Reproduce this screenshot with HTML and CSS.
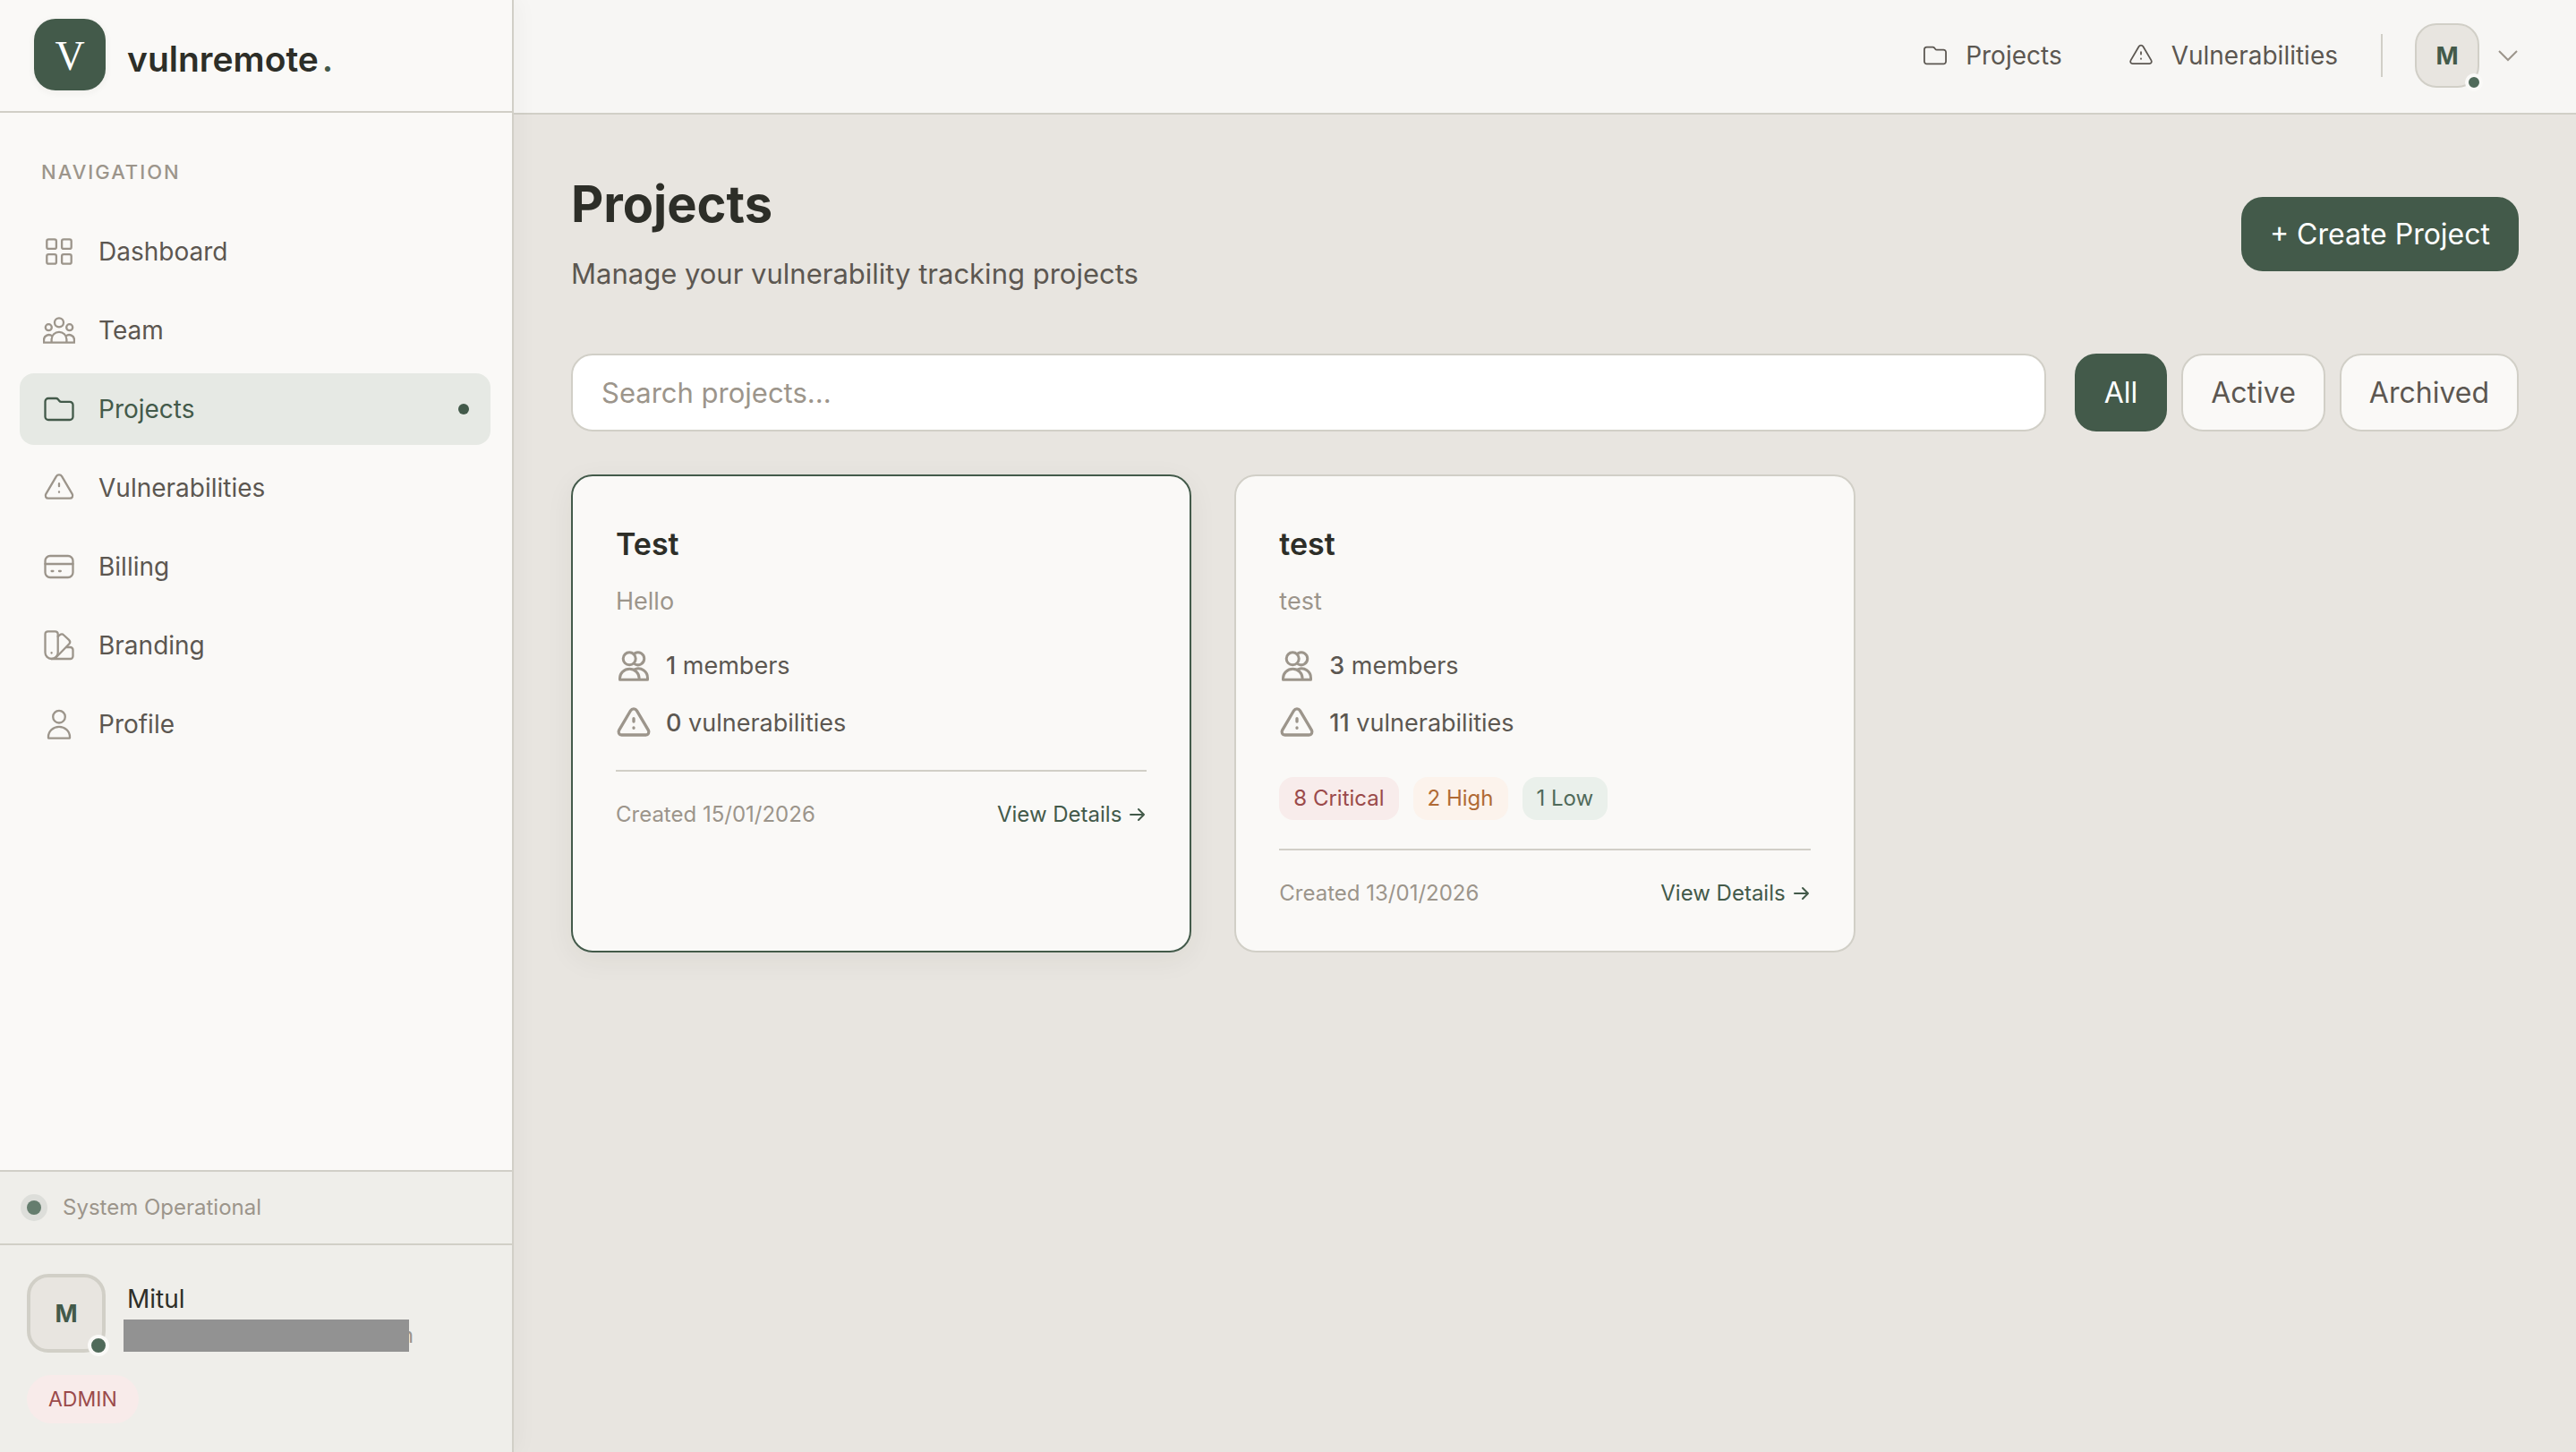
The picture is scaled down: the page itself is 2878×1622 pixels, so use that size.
FILE: index.html
```html
<!DOCTYPE html>
<html lang="en">
<head>
  <meta charset="UTF-8">
  <meta name="viewport" content="width=device-width, initial-scale=1">
  <title>Projects - vulnremote</title>
  <link rel="stylesheet" href="styles.css">
</head>
<body>

<!-- shared icons -->
<svg class="sprite" aria-hidden="true">
  <symbol id="i-grid" viewBox="0 0 36 36">
    <rect x="4.3" y="4.3" width="10.6" height="10.6" rx="2"/>
    <rect x="21.1" y="4.3" width="10.6" height="10.6" rx="2"/>
    <rect x="4.3" y="21.1" width="10.6" height="10.6" rx="2"/>
    <rect x="21.1" y="21.1" width="10.6" height="10.6" rx="2"/>
  </symbol>
  <symbol id="i-team" viewBox="0 0 36 36">
    <circle cx="18" cy="9.3" r="5"/>
    <circle cx="6.3" cy="14.7" r="3.5"/>
    <circle cx="29.7" cy="14.7" r="3.5"/>
    <path d="M1 31.7h34M9.6 31.7V28a8.4 8.1 0 0 1 16.8 0v3.7M1 31.7v-3a5.6 5.6 0 0 1 9.3-4.2M35 31.7v-3a5.6 5.6 0 0 0-9.3-4.2"/>
  </symbol>
  <symbol id="i-folder" viewBox="0 0 36 36">
    <path d="M2.5 9.5A3.5 3.5 0 0 1 6 6h8.6c1 0 1.6.3 2.2 1l1.4 1.7c.6.8 1.2 1.1 2.2 1.1H30a3.5 3.5 0 0 1 3.5 3.5v13.2A3.5 3.5 0 0 1 30 30H6a3.5 3.5 0 0 1-3.5-3.5z"/>
  </symbol>
  <symbol id="i-alert" viewBox="0 0 36 36">
    <path d="M14.9 5.2a3.6 3.6 0 0 1 6.2 0l11.6 19.7c1.3 2.2 0 4.8-2.6 4.8H5.9c-2.6 0-3.9-2.6-2.6-4.8z"/>
    <path d="M18 13.2v3M18 22.4v.4"/>
  </symbol>
  <symbol id="i-card" viewBox="0 0 36 36">
    <rect x="2.5" y="6" width="31" height="24" rx="5.5"/>
    <path d="M2.5 15h31M9.6 23h1.8M18 23h1.8"/>
  </symbol>
  <symbol id="i-swatch" viewBox="0 0 36 36">
    <path d="M2.5 5.3a3 3 0 0 1 3-3h8.2a3 3 0 0 1 3 3v20.6a7.1 7.1 0 0 1-14.2 0z"/>
    <path d="M16.7 8l2-1.6c1.6-1.3 3.2-1.3 4.6.1l5.8 5.3c1.5 1.4 1.5 2.9.2 4.5L14.5 31.5"/>
    <path d="M26.3 20h4.2a3 3 0 0 1 3 3v7a3 3 0 0 1-3 3H9.6M9.6 26.1v.4"/>
  </symbol>
  <symbol id="i-user" viewBox="0 0 36 36">
    <circle cx="18" cy="9.7" r="6.8"/>
    <path d="M6 33.6v-1.4a12 11.4 0 0 1 24 0v1.4z"/>
  </symbol>
  <symbol id="i-members" viewBox="0 0 40 40">
    <circle cx="15.2" cy="11.8" r="7"/>
    <path d="M21.5 5.6a7 7 0 1 1 0 12.4"/>
    <path d="M4.5 35.2v-1.6a10.8 10.3 0 0 1 21.6 0v1.6zM21.5 23.6a10.3 10.3 0 0 1 14 9.8v1.8h-9.4"/>
  </symbol>
</svg>

<div class="app">

  <aside class="sidebar">
    <a class="brand" href="#">
      <span class="brand-logo">V</span>
      <span class="brand-name">vulnremote<span class="brand-dot">.</span></span>
    </a>

    <nav class="side-nav" aria-label="Main">
      <h2 class="nav-label">NAVIGATION</h2>
      <a class="nav-item" href="#"><svg class="icon"><use href="#i-grid"/></svg>Dashboard</a>
      <a class="nav-item" href="#"><svg class="icon"><use href="#i-team"/></svg>Team</a>
      <a class="nav-item active" href="#"><svg class="icon"><use href="#i-folder"/></svg>Projects</a>
      <a class="nav-item" href="#"><svg class="icon"><use href="#i-alert"/></svg>Vulnerabilities</a>
      <a class="nav-item" href="#"><svg class="icon"><use href="#i-card"/></svg>Billing</a>
      <a class="nav-item" href="#"><svg class="icon"><use href="#i-swatch"/></svg>Branding</a>
      <a class="nav-item" href="#"><svg class="icon"><use href="#i-user"/></svg>Profile</a>
    </nav>

    <div class="system">
      <span class="system-dot"></span>
      <span>System Operational</span>
    </div>

    <div class="account">
      <div class="account-row">
        <span class="avatar avatar-lg">M<i class="online"></i></span>
        <div class="account-info">
          <div class="account-name">Mitul</div>
          <!-- email stays masked -->
          <div class="account-email"><span class="mask"></span><span class="tail">m</span></div>
        </div>
      </div>
      <span class="role">ADMIN</span>
    </div>
  </aside>

  <div class="page">
    <header class="topbar">
      <a class="top-link" href="#"><svg class="icon"><use href="#i-folder"/></svg>Projects</a>
      <a class="top-link" href="#"><svg class="icon"><use href="#i-alert"/></svg>Vulnerabilities</a>
      <button class="user-menu" type="button" aria-label="Account menu">
        <span class="avatar">M<i class="online"></i></span>
        <svg class="chevron" viewBox="0 0 24 24"><path d="M2 7l10 10L22 7"/></svg>
      </button>
    </header>

    <main class="content">
      <div class="page-head">
        <div>
          <h1>Projects</h1>
          <p class="subtitle">Manage your vulnerability tracking projects</p>
        </div>
        <button class="btn-create" type="button">+ Create Project</button>
      </div>

      <div class="toolbar">
        <input class="search" type="search" placeholder="Search projects..." aria-label="Search projects">
        <div class="filters">
          <button class="filter on" type="button">All</button>
          <button class="filter" type="button">Active</button>
          <button class="filter" type="button">Archived</button>
        </div>
      </div>

      <div class="cards">
        <article class="card selected">
          <h3>Test</h3>
          <p class="desc">Hello</p>
          <ul class="stats">
            <li><svg class="icon"><use href="#i-members"/></svg><span><b>1</b> members</span></li>
            <li><svg class="icon"><use href="#i-alert"/></svg><span><b>0</b> vulnerabilities</span></li>
          </ul>
          <div class="card-foot">
            <span>Created 15/01/2026</span>
            <a href="#">View Details <svg class="arrow" viewBox="0 0 20 20"><path d="M2 10h15M11 4l6 6-6 6"/></svg></a>
          </div>
        </article>

        <article class="card">
          <h3>test</h3>
          <p class="desc">test</p>
          <ul class="stats">
            <li><svg class="icon"><use href="#i-members"/></svg><span><b>3</b> members</span></li>
            <li><svg class="icon"><use href="#i-alert"/></svg><span><b>11</b> vulnerabilities</span></li>
          </ul>
          <div class="tags">
            <span class="tag critical">8 Critical</span>
            <span class="tag high">2 High</span>
            <span class="tag low">1 Low</span>
          </div>
          <div class="card-foot">
            <span>Created 13/01/2026</span>
            <a href="#">View Details <svg class="arrow" viewBox="0 0 20 20"><path d="M2 10h15M11 4l6 6-6 6"/></svg></a>
          </div>
        </article>
      </div>
    </main>
  </div>

</div>

</body>
</html>
```
FILE: styles.css
```css
:root {
  --green: #435a4a;
  --ink: #2d2e28;
  --text: #5c5751;
  --muted: #9c958b;
  --line: #d1cfc7;
  --paper: #faf9f7;
  --bg: #e8e5e0;
}

* {
  box-sizing: border-box;
  margin: 0;
  padding: 0;
}

body {
  font-family: Inter, "Liberation Sans", sans-serif;
  font-size: 28px;
  color: var(--text);
  background: var(--bg);
}

a {
  color: inherit;
  text-decoration: none;
}

ul {
  list-style: none;
}

button,
input {
  font: inherit;
}

button {
  cursor: pointer;
}

.sprite {
  display: none;
}

.icon {
  width: 36px;
  height: 36px;
  flex: none;
  fill: none;
  stroke: currentColor;
  stroke-width: 2.3;
  stroke-linecap: round;
  stroke-linejoin: round;
}

.app {
  display: flex;
  min-height: 100vh;
}

/* sidebar */
.sidebar {
  position: relative;
  display: flex;
  flex-direction: column;
  width: 574px;
  flex: none;
  background: var(--paper);
  border-right: 2px solid var(--line);
  box-shadow: 4px 0 24px rgba(45, 46, 40, .04);
}

.brand {
  display: flex;
  align-items: flex-start;
  gap: 24px;
  height: 126px;
  padding: 21px 38px;
  border-bottom: 2px solid var(--line);
}

.brand-logo {
  width: 80px;
  height: 80px;
  border-radius: 24px;
  background: var(--green);
  box-shadow: 0 2px 8px rgba(45, 46, 40, .06);
  color: #fff;
  font-family: "Liberation Serif", serif;
  font-size: 46px;
  line-height: 84px;
  text-align: center;
}

.brand-name {
  font-size: 39px;
  font-weight: 600;
  line-height: 90px;
  color: var(--ink);
}

.brand-dot {
  margin-left: 4px;
  color: var(--green);
}

.side-nav {
  display: flex;
  flex-direction: column;
  gap: 8px;
  flex: 1;
  padding: 48px 24px 48px 22px;
}

.nav-label {
  height: 59px;
  padding-left: 24px;
  font-size: 22px;
  font-weight: 500;
  line-height: 36px;
  letter-spacing: 2px;
  color: var(--muted);
}

.nav-item {
  display: flex;
  align-items: center;
  gap: 26px;
  height: 80px;
  padding: 0 24px 0 26px;
  border-radius: 16px;
}

.nav-item .icon {
  color: var(--muted);
}

.nav-item.active {
  background: #e6e9e4;
  color: var(--green);
}

.nav-item.active .icon {
  color: var(--green);
}

.nav-item.active::after {
  content: "";
  width: 12px;
  height: 12px;
  margin-left: auto;
  border-radius: 50%;
  background: var(--green);
}

.system {
  display: flex;
  align-items: center;
  gap: 24px;
  padding: 24px 30px;
  border-top: 2px solid var(--line);
  background: #efeeea;
  font-size: 24px;
  line-height: 32px;
  color: var(--muted);
}

.system-dot {
  width: 16px;
  height: 16px;
  border-radius: 50%;
  background: #657d6e;
  box-shadow: 0 0 0 7px #dddeda;
}

.account {
  padding: 32px 30px;
  border-top: 2px solid var(--line);
  background: #efeeea;
}

.account-row {
  display: flex;
  gap: 20px;
  margin-bottom: 25px;
}

.avatar {
  position: relative;
  display: flex;
  align-items: center;
  justify-content: center;
  width: 72px;
  height: 72px;
  border: 2px solid var(--line);
  border-radius: 24px;
  background: var(--bg);
  color: var(--green);
  font-size: 27px;
  font-weight: 700;
}

.avatar-lg {
  width: 88px;
  height: 88px;
  border-width: 4px;
}

.online {
  position: absolute;
  right: -6px;
  bottom: -6px;
  width: 20px;
  height: 20px;
  border: 4px solid var(--paper);
  border-radius: 50%;
  background: #506a5a;
}

.avatar-lg .online {
  right: -8px;
  bottom: -8px;
  width: 24px;
  height: 24px;
}

.account-name {
  padding: 10px 4px 5px;
  line-height: 36px;
  color: var(--ink);
}

.account-email {
  display: flex;
  align-items: center;
  height: 36px;
  font-size: 24px;
  color: var(--muted);
}

.mask {
  position: relative;
  z-index: 1;
  width: 319px;
  height: 36px;
  background: #929292;
}

/* last letter slides under the mask */
.tail {
  margin-left: -16px;
  line-height: 28px;
}

.role {
  display: inline-block;
  padding: 0 24px;
  border-radius: 27px;
  background: #f8ebea;
  color: #9b4a4a;
  font-size: 23px;
  line-height: 54px;
}

/* right side */
.page {
  flex: 1;
  min-width: 0;
}

.topbar {
  display: flex;
  align-items: center;
  justify-content: flex-end;
  height: 128px;
  padding: 0 64px 2px;
  border-bottom: 2px solid var(--line);
  background: #f7f6f4;
}

.top-link {
  display: flex;
  align-items: center;
  gap: 20px;
  margin-right: 74px;
}

.top-link .icon {
  width: 28px;
  height: 28px;
}

.top-link + .top-link {
  margin-right: 48px;
}

.user-menu {
  display: flex;
  align-items: center;
  gap: 20px;
  border: 0;
  background: none;
}

.user-menu::before {
  content: "";
  width: 2px;
  height: 48px;
  margin-right: 16px;
  background: var(--line);
}

.chevron {
  width: 24px;
  height: 24px;
  fill: none;
  stroke: var(--muted);
  stroke-width: 2;
}

.content {
  padding: 64px;
}

.page-head {
  display: flex;
  align-items: center;
  justify-content: space-between;
  margin-bottom: 64px;
}

h1 {
  font-size: 56px;
  line-height: 72px;
  color: var(--ink);
}

.subtitle {
  margin-top: 16px;
  font-size: 31px;
  line-height: 51px;
}

.btn-create {
  height: 83px;
  padding: 0 32px;
  border: 0;
  border-radius: 24px;
  background: var(--green);
  color: #fff;
  font-size: 32px;
}

.toolbar {
  display: flex;
  gap: 32px;
  margin-bottom: 48px;
}

.search {
  flex: 1;
  min-width: 0;
  height: 87px;
  padding: 0 32px;
  border: 2px solid var(--line);
  border-radius: 24px;
  background: #fff;
  font-size: 31px;
}

.search::placeholder {
  color: var(--muted);
}

.filters {
  display: flex;
  gap: 16px;
}

.filter {
  padding: 0 31px;
  border: 2px solid var(--line);
  border-radius: 24px;
  background: var(--paper);
  color: var(--text);
  font-size: 32px;
}

.filter.on {
  border-color: var(--green);
  background: var(--green);
  color: #fff;
}

.cards {
  display: grid;
  grid-template-columns: repeat(3, 1fr);
  gap: 48px;
}

.card {
  padding: 48px;
  border: 2px solid var(--line);
  border-radius: 24px;
  background: var(--paper);
}

.card.selected {
  border-color: var(--green);
  box-shadow: 0 8px 32px rgba(45, 46, 40, .06);
}

.card h3 {
  font-size: 34px;
  font-weight: 600;
  line-height: 56px;
  color: var(--ink);
}

.desc {
  margin-top: 13px;
  font-size: 27px;
  line-height: 46px;
  color: var(--muted);
}

.stats {
  display: flex;
  flex-direction: column;
  gap: 18px;
  margin: 26px 0 29px;
}

.stats li {
  display: flex;
  align-items: center;
  gap: 16px;
  font-size: 27px;
  line-height: 46px;
}

.stats b {
  font-weight: 500;
}

.stats .icon {
  width: 40px;
  height: 40px;
  stroke-width: 3;
  color: var(--muted);
}

.tags {
  display: flex;
  gap: 16px;
  margin: 37px 0 32px;
}

.tag {
  padding: 0 16px;
  border-radius: 16px;
  font-size: 24px;
  line-height: 48px;
}

.critical {
  background: #f8eceb;
  color: #9b4a4a;
}

.high {
  background: #fcf3ec;
  color: #b06a35;
}

.low {
  background: #eaf0eb;
  color: #506a5a;
}

.card-foot {
  display: flex;
  justify-content: space-between;
  padding-top: 32px;
  border-top: 2px solid var(--line);
  font-size: 24px;
  line-height: 32px;
  color: var(--muted);
}

.card-foot a {
  display: flex;
  align-items: center;
  gap: 8px;
  color: var(--green);
}

.arrow {
  width: 20px;
  height: 20px;
  fill: none;
  stroke: currentColor;
  stroke-width: 2;
  stroke-linecap: round;
  stroke-linejoin: round;
}
```
